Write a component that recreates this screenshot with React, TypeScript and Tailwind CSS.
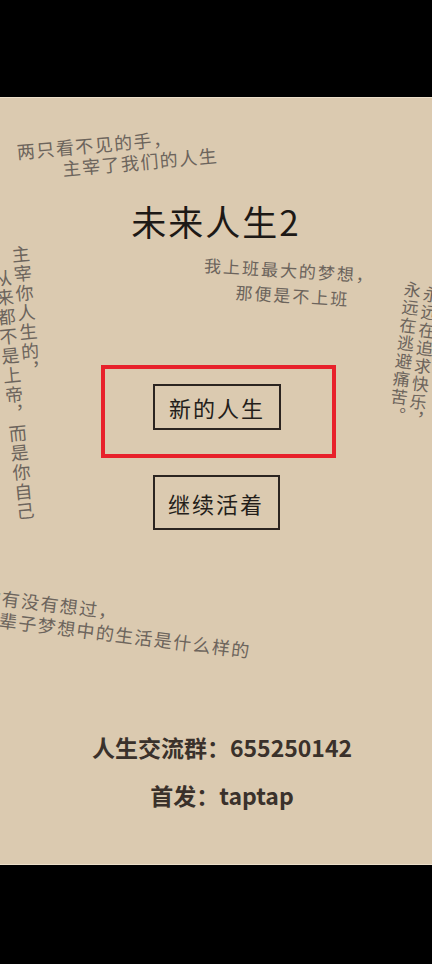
const ink = "text-[#6c645c] whitespace-nowrap";
const vertical = "[writing-mode:vertical-rl]";

function MenuButton({ label, className }: { label: string; className: string }) {
  return (
    <button
      type="button"
      className={`flex items-center justify-center border-2 border-[#2b2420] text-[22px] leading-none tracking-[2px] text-[#241e1a] ${className}`}
    >
      {label}
    </button>
  );
}

export default function App() {
  return (
    <div className="flex h-[964px] w-[432px] flex-col bg-black font-['Noto_Sans_CJK_SC','Noto_Sans',sans-serif]">
      <div className="h-[97px] shrink-0" />

      <main className="relative flex h-[768px] w-full shrink-0 flex-col items-center overflow-hidden border-y border-[#ecdfca] bg-[#dbcab0]">
        {/* scattered quotes */}
        <div className={`absolute left-[16px] top-[43px] origin-top-left -rotate-5 text-[18px] leading-[21px] tracking-[1.5px] ${ink}`}>
          <div>两只看不见的手，</div>
          <div className="pl-[44px]">主宰了我们的人生</div>
        </div>

        <div className={`absolute left-[205px] top-[154px] origin-top-left rotate-[3.5deg] text-[17px] leading-[25px] tracking-[2px] ${ink}`}>
          <div>我上班最大的梦想，</div>
          <div className="pl-[33px]">那便是不上班</div>
        </div>

        <div className={`absolute left-[10px] top-[148px] origin-top-left -rotate-[5.5deg] text-[18px] leading-[19px] tracking-[1.5px] ${vertical} ${ink}`}>
          主宰你人生的，
        </div>
        <div className={`absolute left-[-8px] top-[172px] origin-top-left -rotate-[5.5deg] text-[18px] leading-[19px] tracking-[1.5px] ${vertical} ${ink}`}>
          从来都不是上帝，而是你自己
        </div>

        <div className={`absolute left-[404px] top-[182px] origin-top-left rotate-[7deg] text-[17px] leading-[19px] tracking-[1px] ${vertical} ${ink}`}>
          永远在逃避痛苦。
        </div>
        <div className={`absolute left-[423px] top-[187px] origin-top-left rotate-[7deg] text-[17px] leading-[19px] tracking-[1px] ${vertical} ${ink}`}>
          永远在追求快乐，
        </div>

        <div className={`absolute left-[-16px] top-[486px] origin-top-left rotate-[7deg] text-[18px] leading-[22px] tracking-[1.5px] ${ink}`}>
          <div>你有没有想过，</div>
          <div>这辈子梦想中的生活是什么样的</div>
        </div>

        {/* title + menu */}
        <h1 className="mt-[105px] text-[35px] font-normal leading-none tracking-[2px] text-[#1d1916]">未来人生2</h1>

        <div className="ml-[5px] mt-[127px] border-4 border-[#e8212b] pb-[24px] pl-[48px] pr-[51px] pt-[15px]">
          <MenuButton label="新的人生" className="h-[46px] w-[128px]" />
        </div>

        <MenuButton label="继续活着" className="mt-[17px] h-[55px] w-[127px]" />

        <p className="ml-[12px] mt-[206px] text-[23px] font-bold leading-none text-[#3a312b]">人生交流群：655250142</p>
        <p className="ml-[12px] mt-[25px] text-[23px] font-bold leading-none text-[#3a312b]">首发：taptap</p>
      </main>

      <div className="flex-1" />
    </div>
  );
}
